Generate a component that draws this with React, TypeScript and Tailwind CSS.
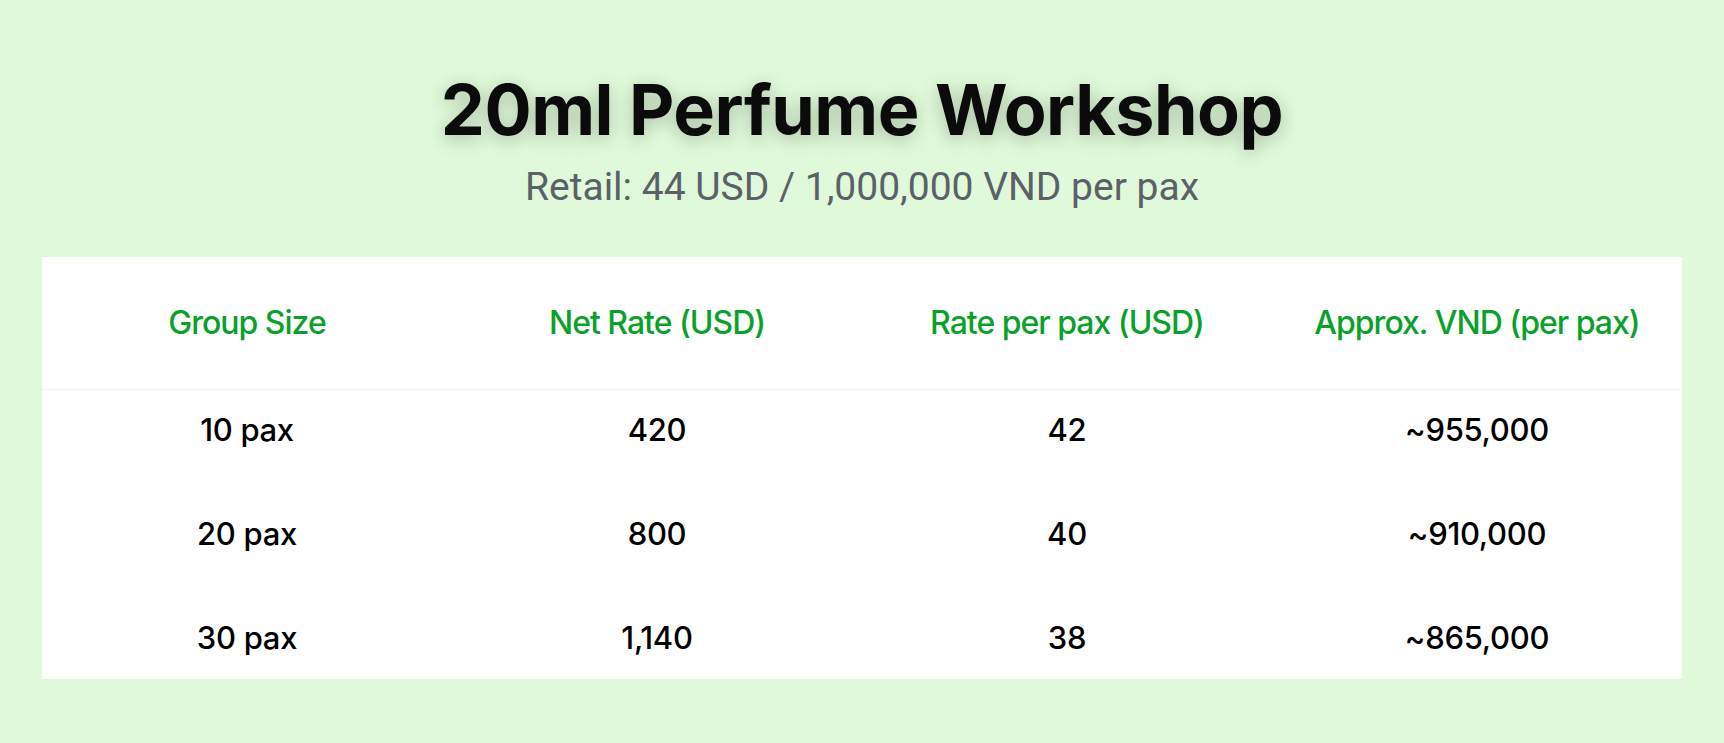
import React from 'react';

const rows = [
    { size: '10 pax', net: '420', rate: '42', vnd: '~955,000' },
    { size: '20 pax', net: '800', rate: '40', vnd: '~910,000' },
    { size: '30 pax', net: '1,140', rate: '38', vnd: '~865,000' },
];

const App: React.FC = () => {
    return (
        <div className="min-h-[743px] w-full bg-[#e0f9da] px-[42px] pt-[68px] pb-[60px]">
            <div className="flex flex-col items-center">
                <h1
                    className="text-[70px] leading-[84px] font-bold text-[#0b0b0b] tracking-[-0.5px] font-['Inter',sans-serif]"
                    style={{ textShadow: '0 4px 18px rgba(0,0,0,0.25)' }}
                >
                    20ml Perfume Workshop
                </h1>
                <p className="mt-[7px] text-[39px] leading-[56px] text-[#5b6167] font-['Roboto',sans-serif]">
                    Retail: 44 USD / 1,000,000 VND per pax
                </p>
            </div>

            <div className="mt-[42px] bg-white font-['Inter',sans-serif]">
                {/* header */}
                <div className="grid grid-cols-4 h-[133px] items-center border-b border-[#f4f4f4]">
                    {['Group Size', 'Net Rate (USD)', 'Rate per pax (USD)', 'Approx. VND (per pax)'].map(h => (
                        <div key={h} className="text-center text-[32px] font-medium text-[#0aa12b] tracking-[-1px]">
                            {h}
                        </div>
                    ))}
                </div>

                <div className="flex flex-col gap-[23px]">
                    {rows.map(r => (
                        <div key={r.size} className="grid grid-cols-4 h-[81px] items-center text-[31px] font-medium text-black tracking-[-0.3px]">
                            <div className="text-center">{r.size}</div>
                            <div className="text-center">{r.net}</div>
                            <div className="text-center">{r.rate}</div>
                            <div className="text-center">{r.vnd}</div>
                        </div>
                    ))}
                </div>
            </div>
        </div>
    );
};

export default App;
